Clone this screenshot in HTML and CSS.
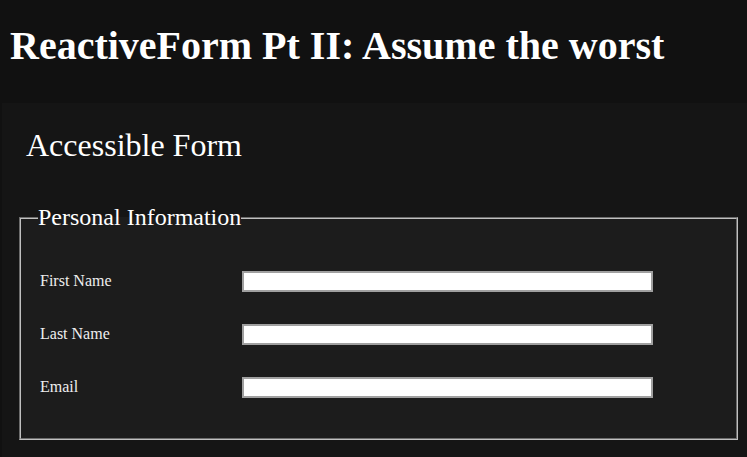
FILE: index.html
```html
<!DOCTYPE html>
<html lang="en">
<head>
  <meta charset="UTF-8" />
  <meta name="viewport" content="width=device-width, initial-scale=1.0" />
  <title>ReactiveForm Pt II: Assume the worst</title>
  <link rel="stylesheet" href="styles.css">
</head>
<body>
  <header class="page-header">
    <h1>ReactiveForm Pt II: Assume the worst</h1>
  </header>
  <main class="panel">
    <h2>Accessible Form</h2>
    <form class="form" novalidate>
      <fieldset>
        <legend>Personal Information</legend>
        <div class="form-row">
          <label for="firstName">First Name</label>
          <input type="text" id="firstName" name="firstName" />
        </div>
        <div class="form-row">
          <label for="lastName">Last Name</label>
          <input type="text" id="lastName" name="lastName" />
        </div>
        <div class="form-row">
          <label for="email">Email</label>
          <input type="email" id="email" name="email" />
        </div>
      </fieldset>
    </form>
  </main>
</body>
</html>
```

FILE: styles.css
```css
body {
  font-family: 'Liberation Serif', 'Times New Roman', serif;
  background-color: #111111;
  color: #ffffff;
  margin: 0;
}

.page-header {
  height: 103px;
  padding: 22px 10px 0;
  box-sizing: border-box;
}

.page-header h1 {
  margin: 0;
  font-size: 40px;
  font-weight: bold;
}

.panel {
  margin-left: 2px;
  padding: 24px 9px 17px 17px;
  background-color: #151515;
}

.panel h2 {
  margin: 0 0 40px;
  padding-left: 7px;
  font-size: 32px;
  font-weight: normal;
}

.form {
  margin: 0;
}

fieldset {
  margin: 0;
  padding: 40px 0 40px 17px;
  border: 2px groove #c0c0c0;
  background-color: #1c1c1c;
}

legend {
  padding: 0;
  font-size: 24px;
}

.form-row {
  display: grid;
  grid-template-columns: 202px 411px;
  align-items: center;
  padding-left: 2px;
}

.form-row + .form-row {
  margin-top: 32px;
}

label {
  margin-top: -1px;
  font-size: 16px;
  color: #eeeeee;
}

input {
  width: 411px;
  height: 21px;
  box-sizing: border-box;
  margin: 0;
  padding: 1px 2px;
  border: 2px solid #a0a0a0;
  background-color: #ffffff;
  font-size: 13px;
}
```
